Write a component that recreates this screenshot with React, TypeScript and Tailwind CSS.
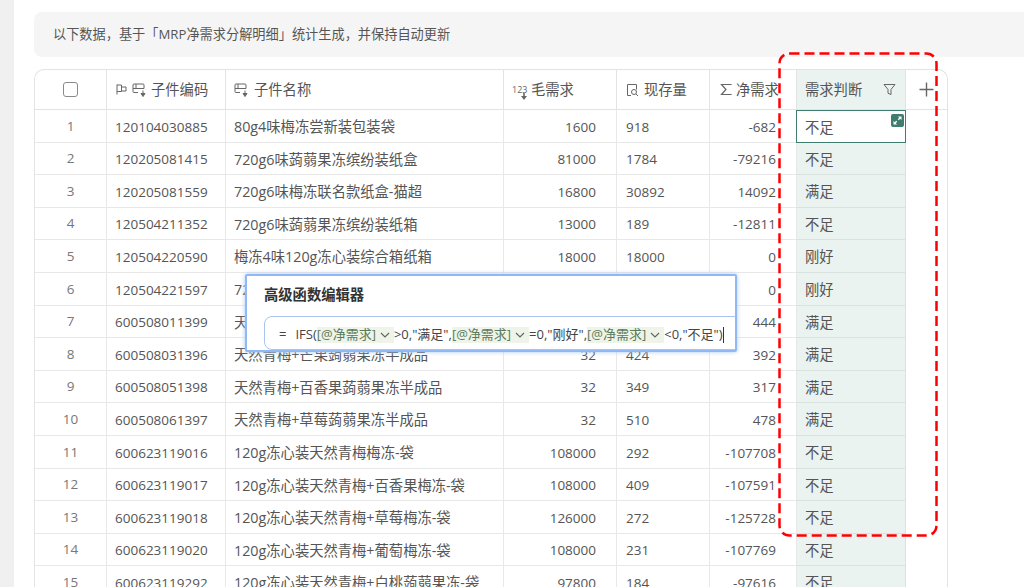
const font = { fontFamily: '"Open Sans", "Noto Sans CJK SC", sans-serif' };

const rows = [
  ["1", "120104030885", "80g4味梅冻尝新装包装袋", "1600", "918", "-682", "不足"],
  ["2", "120205081415", "720g6味蒟蒻果冻缤纷装纸盒", "81000", "1784", "-79216", "不足"],
  ["3", "120205081559", "720g6味梅冻联名款纸盒-猫超", "16800", "30892", "14092", "满足"],
  ["4", "120504211352", "720g6味蒟蒻果冻缤纷装纸箱", "13000", "189", "-12811", "不足"],
  ["5", "120504220590", "梅冻4味120g冻心装综合箱纸箱", "18000", "18000", "0", "刚好"],
  ["6", "120504221597", "720g6味梅冻综合装纸箱", "18000", "18000", "0", "刚好"],
  ["7", "600508011399", "天然青梅+蓝莓蒟蒻果冻半成品", "32", "476", "444", "满足"],
  ["8", "600508031396", "天然青梅+芒果蒟蒻果冻半成品", "32", "424", "392", "满足"],
  ["9", "600508051398", "天然青梅+百香果蒟蒻果冻半成品", "32", "349", "317", "满足"],
  ["10", "600508061397", "天然青梅+草莓蒟蒻果冻半成品", "32", "510", "478", "满足"],
  ["11", "600623119016", "120g冻心装天然青梅梅冻-袋", "108000", "292", "-107708", "不足"],
  ["12", "600623119017", "120g冻心装天然青梅+百香果梅冻-袋", "108000", "409", "-107591", "不足"],
  ["13", "600623119018", "120g冻心装天然青梅+草莓梅冻-袋", "126000", "272", "-125728", "不足"],
  ["14", "600623119020", "120g冻心装天然青梅+葡萄梅冻-袋", "108000", "231", "-107769", "不足"],
  ["15", "600623119292", "120g冻心装天然青梅+白桃蒟蒻果冻-袋", "97800", "184", "-97616", "不足"],
];

function LookupIcon() {
  return (
    <svg width="15" height="16" viewBox="0 0 15 16" fill="none" stroke="#666" strokeWidth="1" className="shrink-0">
      <path d="M6 10.500H2a1 1 0 0 1-1-1V3a1 1 0 0 1 1-1h9a1 1 0 0 1 1 1v3.500H1" />
      <path d="M4 2v4.500" />
      <path d="M11 8.500v3.500M9 11.500l2 3 2-3z" fill="#666" />
    </svg>
  );
}

function Chip() {
  return (
    <span className="inline-flex h-[16px] items-center bg-[#eef5e8] text-[#5d7a5b]">
      [@净需求]
      <svg width="12" height="12" viewBox="0 0 12 12" fill="none" stroke="#666" strokeWidth="1.2" className="mx-[3px]">
        <path d="M2 4l4 4 4-4" />
      </svg>
    </span>
  );
}

function HeaderRow() {
  return (
    <div className="flex h-[40px] border-b border-[#e3e3e3] text-[14.3px] text-[#555]">
      <div className="flex w-[72px] items-center justify-center border-r border-[#e3e3e3]">
        <div className="h-[15px] w-[15px] rounded-[3px] border border-[#8a8a8a]" />
      </div>
      <div className="flex w-[119px] items-center gap-[4px] border-r border-[#e3e3e3] pl-[8px]">
        <svg width="13" height="13" viewBox="0 0 13 13" fill="none" stroke="#666" strokeWidth="1" className="shrink-0">
          <path d="M2 1.500v10M2 2h4.500v6.500H2M6.500 4h4.500v4H6.500" />
        </svg>
        <LookupIcon />
        <span>子件编码</span>
      </div>
      <div className="flex w-[278px] items-center gap-[5px] border-r border-[#e3e3e3] pl-[8px]">
        <LookupIcon />
        <span>子件名称</span>
      </div>
      <div className="flex w-[113px] items-center border-r border-[#e3e3e3] pl-[8px]">
        <span className="relative w-[17px] text-[9px] leading-none text-[#666]">
          123
          <svg width="6" height="7" viewBox="0 0 6 7" fill="#666" className="absolute top-[8px] left-[9px]">
            <path d="M2.200 0h1.600v3H6L3 7 0 3h2.200z" />
          </svg>
        </span>
        <span className="ml-[2px]">毛需求</span>
      </div>
      <div className="flex w-[93px] items-center gap-[5px] border-r border-[#e3e3e3] pl-[9px]">
        <svg width="13" height="14" viewBox="0 0 13 14" fill="none" stroke="#666" strokeWidth="1" className="shrink-0">
          <path d="M5 12.500H1.500v-11h9v5" />
          <circle cx="8" cy="9" r="2.500" />
          <path d="M10 11l2 2" />
        </svg>
        <span>现存量</span>
      </div>
      <div className="flex w-[87px] items-center gap-[4px] overflow-hidden border-r border-[#e3e3e3] pl-[10px]">
        <svg width="12" height="13" viewBox="0 0 12 13" fill="none" stroke="#666" strokeWidth="1.200" className="shrink-0">
          <path d="M11 2V1.500H1.500L6 6.500l-4.500 5H11V11" />
        </svg>
        <span className="shrink-0">净需求</span>
      </div>
      <div className="flex w-[109px] items-center justify-between border-r border-[#dde6e2] bg-[#eaf3f0] pr-[9px] pl-[8px]">
        <span>需求判断</span>
        <svg width="13" height="13" viewBox="0 0 13 13" fill="none" stroke="#666" strokeWidth="1">
          <path d="M1 1.500h11L8 6.500v5l-3-1.200V6.500z" />
        </svg>
      </div>
      <div className="flex w-[41px] items-center justify-center">
        <svg width="15" height="15" viewBox="0 0 15 15" stroke="#666" strokeWidth="1.400">
          <path d="M7.500 0.500v14M0.500 7.500h14" />
        </svg>
      </div>
    </div>
  );
}

function DataRow({ row, active }: { row: string[]; active: boolean }) {
  return (
    <div className="flex h-[32.6px] text-[13.5px] text-[#555]">
      <div className="flex w-[72px] items-center justify-center border-r border-b border-[#e8e8e8] text-[#777]">{row[0]}</div>
      <div className="flex w-[119px] items-center border-r border-b border-[#e8e8e8] pt-[2px] pl-[8px]">{row[1]}</div>
      <div className="flex w-[278px] items-center overflow-hidden border-r border-b border-[#e8e8e8] pt-[2px] pl-[8px] text-[14.3px] whitespace-nowrap">{row[2]}</div>
      <div className="flex w-[113px] items-center justify-end border-r border-b border-[#e8e8e8] pt-[2px] pr-[20px]">{row[3]}</div>
      <div className="flex w-[93px] items-center border-r border-b border-[#e8e8e8] pt-[2px] pl-[9px]">{row[4]}</div>
      <div className="flex w-[87px] items-center justify-end border-r border-b border-[#e8e8e8] pt-[2px] pr-[20px]">{row[5]}</div>
      {active ? (
        <div className="relative -ml-px flex w-[110px] items-center border-[1.5px] border-[#3f7d6e] bg-white pt-[2px] pl-[8px] text-[14.3px]">
          {row[6]}
          <span className="absolute top-[3px] right-[1px] flex h-[13px] w-[13px] items-center justify-center rounded-[2px] bg-[#3f7d6e]">
            <svg width="9" height="9" viewBox="0 0 9 9" fill="#fff">
              <path d="M5 0.500h3.500V4L7.300 2.800 5.800 4.200 4.800 3.200 6.200 1.700zM4 8.500H0.500V5L1.700 6.200 3.200 4.800 4.200 5.800 2.800 7.300z" />
            </svg>
          </span>
        </div>
      ) : (
        <div className="flex w-[109px] items-center border-r border-b border-[#d8e3df] bg-[#eaf3f0] pt-[2px] pl-[8px] text-[14.3px]">{row[6]}</div>
      )}
      <div className="w-[41px]" />
    </div>
  );
}

export default function App() {
  return (
    <div className="relative flex h-[587px] w-[1024px] overflow-hidden bg-white" style={font}>
      <div className="w-[14px] shrink-0 bg-[#f0f0f0]" />
      <div className="min-w-0 flex-1 pt-[12px] pl-[20px]">
        <div className="flex h-[45px] items-center rounded-l-[8px] bg-[#f5f5f5] pl-[19px] text-[13.2px] text-[#555]">
          以下数据，基于「MRP净需求分解明细」统计生成，并保持自动更新
        </div>
        <div className="mt-[12px] w-[914px] overflow-hidden rounded-t-[10px] border-x border-t border-[#e3e3e3]">
          <HeaderRow />
          {rows.map((row, i) => (
            <DataRow key={row[0]} row={row} active={i === 0} />
          ))}
        </div>
      </div>

      <div className="absolute top-[274px] left-[245px] h-[78px] w-[492px] overflow-hidden rounded-[2px] border-2 border-[#8fb8f5] bg-white pt-[9px] pl-[17px] shadow-[0_0_4px_#a9c8f7]">
        <div className="text-[14.3px] leading-[20px] font-semibold text-[#333]">高级函数编辑器</div>
        <div className="mt-[11px] -mr-[2px] flex h-[34px] items-center rounded-l-[8px] border border-[#a9c4ee] pt-[3px] pl-[14px] text-[13px] whitespace-nowrap text-[#444]">
          <span className="mr-[9px]">=</span>
          IFS(
          <Chip />
          <span>&gt;0,"满足",</span>
          <Chip />
          <span>=0,"刚好",</span>
          <Chip />
          <span>&lt;0,"不足")</span>
          <span className="h-[16px] w-px bg-[#333]" />
        </div>
      </div>

      <svg width="160" height="485" viewBox="0 0 160 485" fill="none" className="pointer-events-none absolute top-[52px] left-[778px]">
        <rect x="1.500" y="1.500" width="157" height="482" rx="10" stroke="#ff0000" strokeWidth="2.500" strokeDasharray="10 5" />
      </svg>
    </div>
  );
}
